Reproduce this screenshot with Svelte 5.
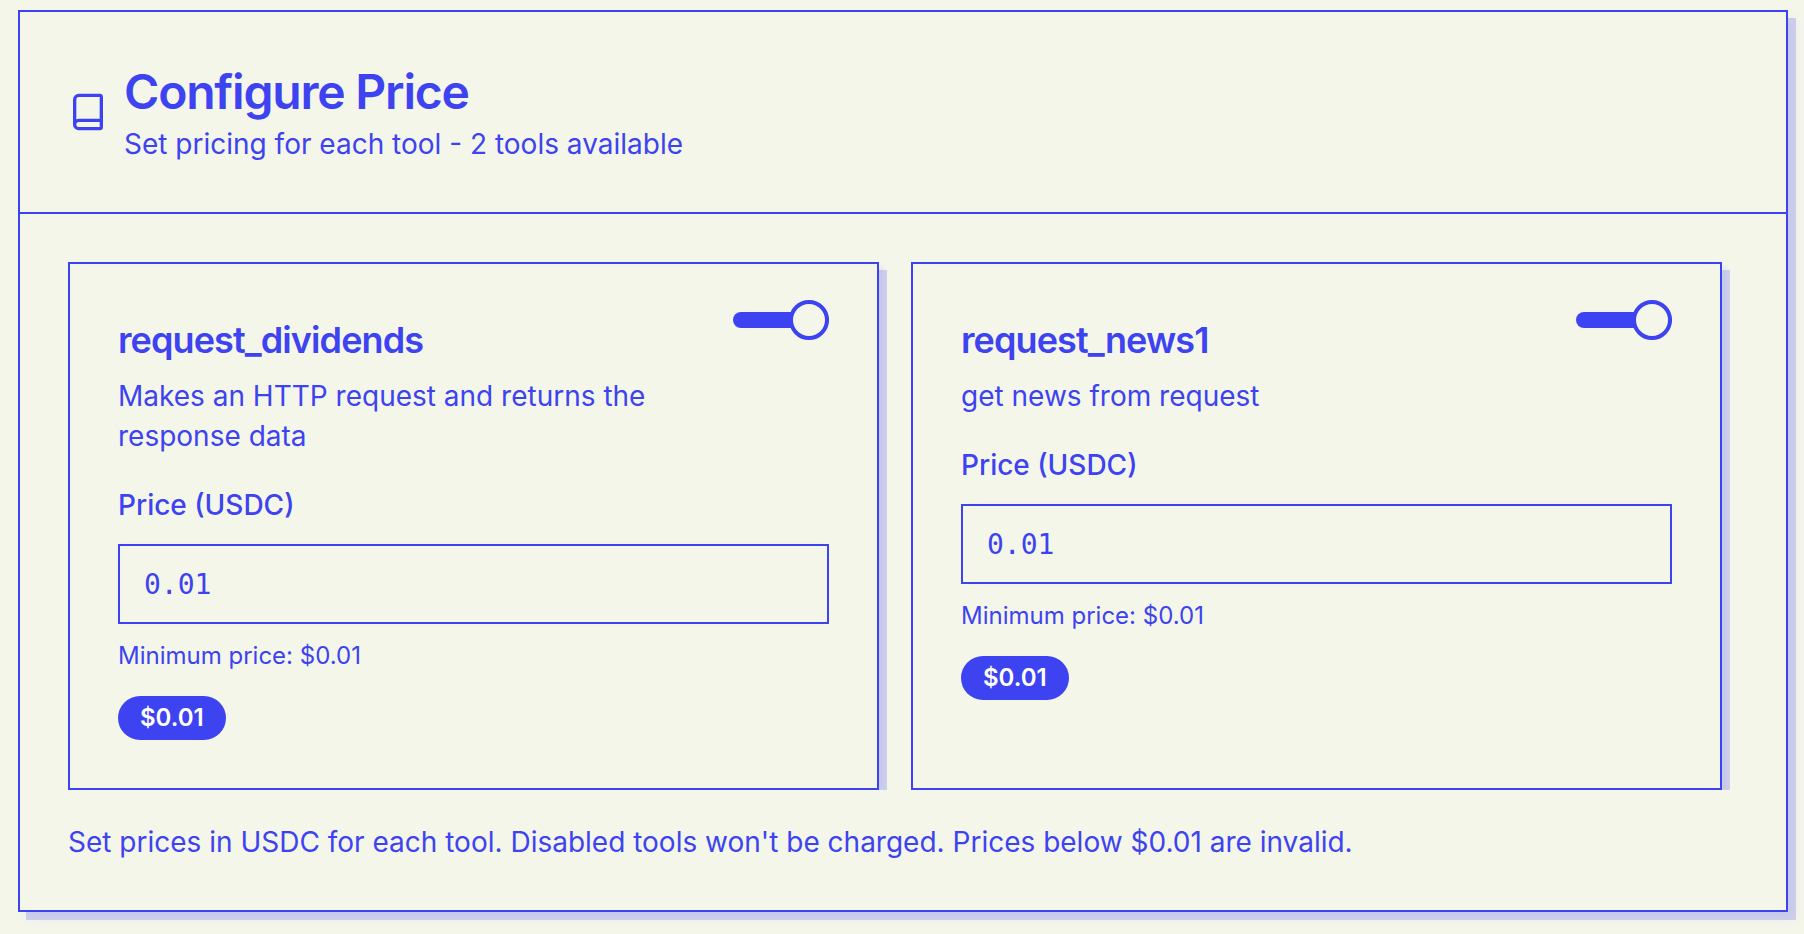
<script>
  let tools = $state([
    {
      id: 'request_dividends',
      description: 'Makes an HTTP request and returns the response data',
      price: '0.01',
      enabled: true
    },
    {
      id: 'request_news1',
      description: 'get news from request',
      price: '0.01',
      enabled: true
    }
  ]);
</script>

<main class="panel">
  <header class="panel-header">
    <svg class="book" viewBox="0 0 24 24" aria-hidden="true">
      <path
        d="M4 19.5v-15A2.5 2.5 0 0 1 6.5 2H19a1 1 0 0 1 1 1v18a1 1 0 0 1-1 1H6.500a1 1 0 0 1 0-5H20"
      />
    </svg>
    <div>
      <h1>Configure Price</h1>
      <p class="text">Set pricing for each tool - {tools.length} tools available</p>
    </div>
  </header>

  <div class="panel-body">
    <div class="cards">
      {#each tools as tool (tool.id)}
        <section class="card">
          <div class="card-top">
            <div class="card-title">
              <h2 id={'name-' + tool.id}>{tool.id}</h2>
              <p class="text">{tool.description}</p>
            </div>
            <input
              class="switch"
              type="checkbox"
              role="switch"
              aria-labelledby={'name-' + tool.id}
              bind:checked={tool.enabled}
            />
          </div>
          <label class="label" for={'price-' + tool.id}>Price (USDC)</label>
          <input
            class="price"
            id={'price-' + tool.id}
            type="text"
            inputmode="decimal"
            bind:value={tool.price}
          />
          <p class="hint">Minimum price: $0.01</p>
          <span class="badge">${tool.price}</span>
        </section>
      {/each}
    </div>
    <p class="text note">
      Set prices in USDC for each tool. Disabled tools won't be charged. Prices below $0.01 are
      invalid.
    </p>
  </div>
</main>

<style>
  :global(body) {
    --ink: #3d43f0;
    --paper: #f5f6ea;
    background: var(--paper);
    color: var(--ink);
    font-family: Inter, sans-serif;
  }

  .panel,
  .panel * {
    box-sizing: border-box;
  }

  h1,
  h2,
  p {
    margin: 0;
  }

  h1,
  h2 {
    font-weight: 600;
    letter-spacing: -0.025em;
  }

  .panel {
    margin: 10px 16px 22px 18px;
    border: 2px solid var(--ink);
    background: var(--paper);
    box-shadow:
      8px 8px 0 rgba(61, 67, 240, 0.2),
      8px 8px 12px 0 rgba(61, 67, 240, 0.06);
  }

  .panel-header {
    display: flex;
    align-items: center;
    gap: 16px;
    padding: 48px;
    border-bottom: 2px solid var(--ink);
  }

  .book {
    flex: none;
    width: 40px;
    height: 40px;
    fill: none;
    stroke: currentColor;
    stroke-width: 2;
    stroke-linecap: round;
    stroke-linejoin: round;
  }

  h1 {
    font-size: 48px;
    line-height: 64px;
  }

  .text {
    font-size: 28px;
    line-height: 40px;
  }

  .panel-body {
    padding: 48px;
  }

  .cards {
    display: grid;
    grid-template-columns: 1fr 1fr;
    gap: 32px;
    padding-right: 16px;
    overflow: hidden;
  }

  .card {
    padding: 48px;
    border: 2px solid var(--ink);
    box-shadow:
      8px 8px 0 rgba(61, 67, 240, 0.2),
      8px 2px 4px -2px rgba(61, 67, 240, 0.06);
  }

  .card-top {
    display: flex;
    align-items: flex-start;
    justify-content: space-between;
  }

  h2 {
    margin-bottom: 8px;
    font-size: 36px;
    line-height: 56px;
  }

  .switch {
    appearance: none;
    position: relative;
    flex: none;
    width: 96px;
    height: 16px;
    margin: 0;
    border-radius: 8px;
    background: var(--ink);
    cursor: pointer;
  }

  .switch:not(:checked) {
    background: rgba(61, 67, 240, 0.2);
  }

  .switch::before {
    content: '';
    position: absolute;
    box-sizing: border-box;
    top: -12px;
    left: 0;
    width: 40px;
    height: 40px;
    border: 4px solid var(--ink);
    border-radius: 50%;
    background: var(--paper);
  }

  .switch:checked::before {
    left: auto;
    right: 0;
  }

  .label {
    display: block;
    margin: 32px 0 22px;
    font-size: 28px;
    line-height: 34px;
    font-weight: 500;
  }

  .price {
    display: block;
    width: 100%;
    height: 80px;
    padding: 0 24px;
    border: 2px solid var(--ink);
    border-radius: 0;
    background: transparent;
    color: var(--ink);
    font-family: 'DejaVu Sans Mono', monospace;
    font-size: 28px;
  }

  .hint {
    margin: 16px 0 24px;
    font-size: 24px;
    line-height: 32px;
  }

  .badge {
    display: inline-block;
    padding: 0 22px;
    border-radius: 22px;
    background: var(--ink);
    color: #fff;
    font-size: 24px;
    line-height: 44px;
    font-weight: 600;
    vertical-align: top;
  }

  .note {
    margin-top: 32px;
  }
</style>
